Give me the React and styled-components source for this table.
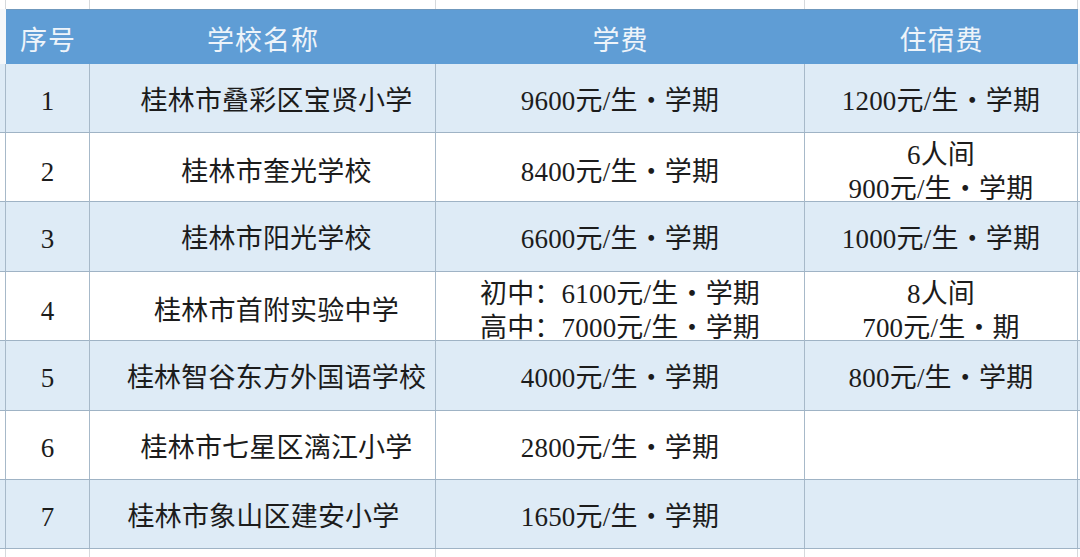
import React from 'react'
import styled, { createGlobalStyle } from 'styled-components'

const GlobalStyle = createGlobalStyle`
  html, body {
    margin: 0;
    padding: 0;
    background: #ffffff;
  }
`

const COLS = '6px 84px 346px 369px 273px 2px'

const Page = styled.div`
  width: 1080px;
  height: 557px;
  overflow: hidden;
  display: flex;
  flex-direction: column;
  font-family: "Liberation Serif", "Noto Sans CJK SC", serif;
  color: #1c1c1c;
`

const Strip = styled.div`
  display: grid;
  grid-template-columns: ${COLS};
  height: ${p => p.$h}px;
  flex: 0 0 auto;
  background: #ffffff;
`

const StripCell = styled.div`
  border-right: 1px solid #d6d9dc;
  &:last-child {
    border-right: none;
  }
`

const HeaderRow = styled.div`
  display: grid;
  grid-template-columns: ${COLS};
  height: 55px;
  flex: 0 0 auto;
`

const HeaderStub = styled.div`
  background: #f4f7fa;
`

const HeaderCell = styled.div`
  background: #5f9dd5;
  border-top: 1px solid #6f98bd;
  display: flex;
  align-items: center;
  justify-content: center;
  padding-top: 2px;
  font-size: 27px;
  color: #eef4fa;
  letter-spacing: 1px;
`

const Row = styled.div`
  display: grid;
  grid-template-columns: ${COLS};
  height: ${p => p.$h}px;
  flex: 0 0 auto;
  background: ${p => (p.$shade ? '#deebf6' : '#ffffff')};
  border-bottom: 1px solid #9fb3c5;
  box-sizing: border-box;
`

const Cell = styled.div`
  border-right: 1px solid #a7b9c9;
  display: flex;
  flex-direction: column;
  align-items: center;
  justify-content: center;
  box-sizing: border-box;
  padding-top: 5px;
  font-size: 27px;
  line-height: 34px;
  letter-spacing: 0.2px;
  padding-left: ${p => p.$indent || 0}px;
  white-space: nowrap;
  &:last-child {
    border-right: none;
  }
`

const Line = styled.div``

const rows = [
  { no: '1', name: '桂林市叠彩区宝贤小学', indent: 28, fee: ['9600元/生・学期'], room: ['1200元/生・学期'], h: 69 },
  { no: '2', name: '桂林市奎光学校', indent: 28, fee: ['8400元/生・学期'], room: ['6人间', '900元/生・学期'], h: 69 },
  { no: '3', name: '桂林市阳光学校', indent: 28, fee: ['6600元/生・学期'], room: ['1000元/生・学期'], h: 70 },
  { no: '4', name: '桂林市首附实验中学', indent: 28, fee: ['初中：6100元/生・学期', '高中：7000元/生・学期'], room: ['8人间', '700元/生・期'], h: 69 },
  { no: '5', name: '桂林智谷东方外国语学校', indent: 28, fee: ['4000元/生・学期'], room: ['800元/生・学期'], h: 70 },
  { no: '6', name: '桂林市七星区漓江小学', indent: 28, fee: ['2800元/生・学期'], room: [], h: 69 },
  { no: '7', name: '桂林市象山区建安小学', indent: 2, fee: ['1650元/生・学期'], room: [], h: 69 }
]

const GridStrip = ({ h }) => (
  <Strip $h={h}>
    {[0, 1, 2, 3, 4, 5].map(i => <StripCell key={i} />)}
  </Strip>
)

export default function App() {
  return (
    <Page>
      <GlobalStyle />
      <GridStrip h={9} />
      <HeaderRow>
        <HeaderStub />
        <HeaderCell>序号</HeaderCell>
        <HeaderCell>学校名称</HeaderCell>
        <HeaderCell>学费</HeaderCell>
        <HeaderCell>住宿费</HeaderCell>
        <HeaderStub />
      </HeaderRow>
      {rows.map((r, i) => (
        <Row key={r.no} $h={r.h} $shade={i % 2 === 0}>
          <Cell />
          <Cell>{r.no}</Cell>
          <Cell $indent={r.indent}>{r.name}</Cell>
          <Cell>
            {r.fee.map(t => <Line key={t}>{t}</Line>)}
          </Cell>
          <Cell>
            {r.room.map(t => <Line key={t}>{t}</Line>)}
          </Cell>
          <Cell />
        </Row>
      ))}
      <GridStrip h={8} />
    </Page>
  )
}
